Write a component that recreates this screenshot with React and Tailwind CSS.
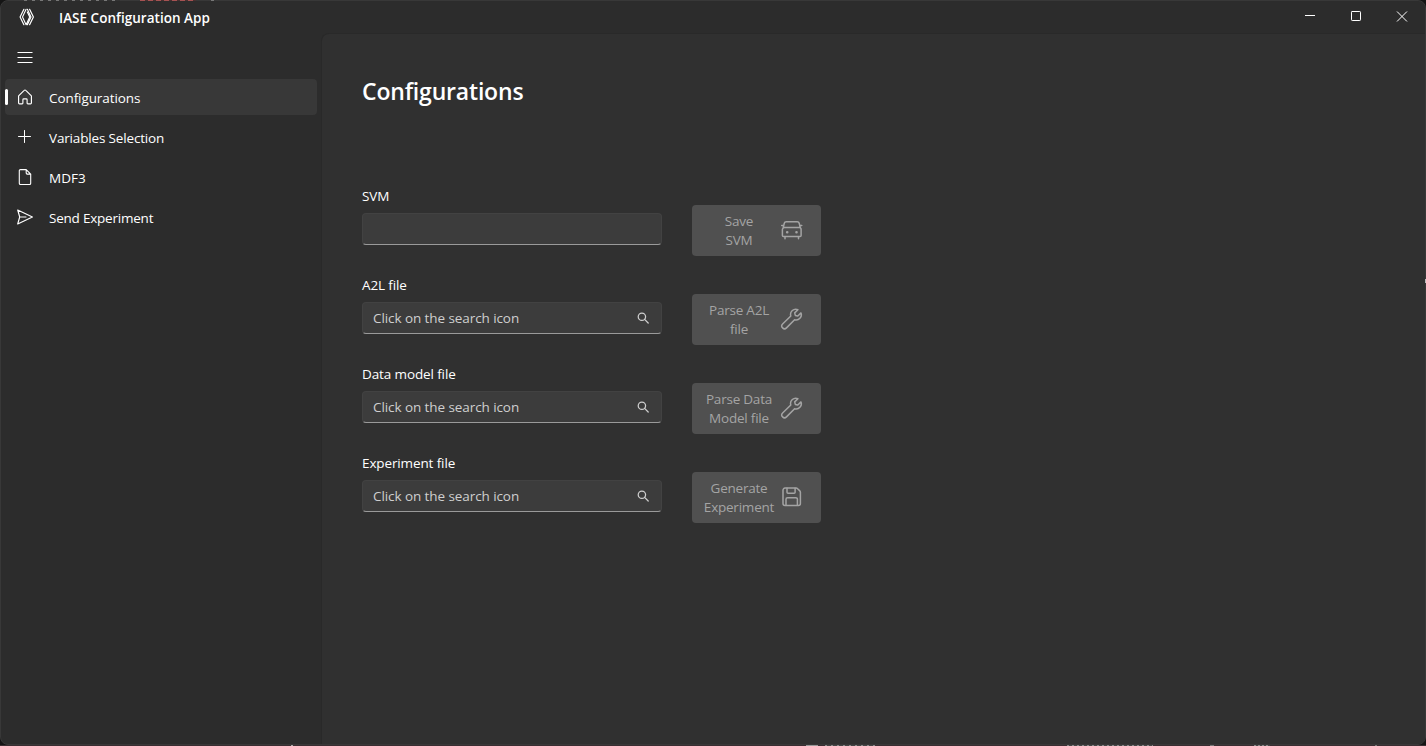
import React from 'react';

function Stroke({ w, h, sw = 1, className = '', children }) {
  return (
    <svg width={w} height={h} viewBox={`0 0 ${w} ${h}`} fill="none" stroke="currentColor" strokeWidth={sw} strokeLinecap="round" strokeLinejoin="round" className={`shrink-0 ${className}`}>
      {children}
    </svg>
  );
}

const HomeIcon = () => (
  <Stroke w={16} h={16} sw={1.15}>
    <path d="M1.6 6.9 7.2 1.3a1.1 1.1 0 0 1 1.6 0l5.6 5.6v7.1a.9.9 0 0 1-.9.9h-2.6a.8.8 0 0 1-.8-.8v-3.4a.8.8 0 0 0-.8-.8H6.7a.8.8 0 0 0-.8.8v3.4a.8.8 0 0 1-.8.8H2.5a.9.9 0 0 1-.9-.9z" />
  </Stroke>
);
const PlusIcon = () => (
  <Stroke w={16} h={16}>
    <path d="M7.5 1.5v12M1.5 7.5h12" />
  </Stroke>
);
const DocIcon = () => (
  <Stroke w={16} h={16} sw={1.1}>
    <path d="M9.2.6H3.5a1.2 1.2 0 0 0-1.2 1.2v12.5a1.2 1.2 0 0 0 1.2 1.2h9a1.2 1.2 0 0 0 1.2-1.2V5.1zM9.2.6v3.5a1 1 0 0 0 1 1h3.5" />
  </Stroke>
);
const SendIcon = () => (
  <Stroke w={16} h={16} sw={1.15}>
    <path d="M.7 1 15.4 8 .7 15l2-7zM2.7 8H9" />
  </Stroke>
);
const CarIcon = () => (
  <Stroke w={24} h={24} sw={1.5}>
    <path d="M3.2 9.6 4.3 5.3a2 2 0 0 1 2-1.5h10.9a2 2 0 0 1 2 1.5l1.1 4.3M1.7 7.6h1.6M20.2 7.6h1.6M4.4 9.6h14.7a2 2 0 0 1 2 2v6a1 1 0 0 1-1 1H3.4a1 1 0 0 1-1-1v-6a2 2 0 0 1 2-2zM5 19v1.8M18.5 19v1.8" />
    <path d="M7.2 14.2h.02M16.5 14.2h.02" strokeWidth="2.6" />
  </Stroke>
);
const WrenchIcon = () => (
  <Stroke w={24} h={24} sw={1.5}>
    <path d="M17.9 2.7a5.2 5.2 0 0 0-7.1 6.3L2.6 17a2.75 2.75 0 0 0 3.9 3.9l8.1-8.2a5.2 5.2 0 0 0 6.4-6.8l-3.2 3.1-2.5-.6-.6-2.5z" />
  </Stroke>
);
const SaveIcon = () => (
  <Stroke w={24} h={24} sw={1.5}>
    <path d="M5 3.1h11.2a2 2 0 0 1 1.4.6l2.2 2.2a2 2 0 0 1 .6 1.4v11.1a2 2 0 0 1-2 2H5a2 2 0 0 1-2-2V5.1a2 2 0 0 1 2-2z" />
    <path d="M7 3.3v3.9a1 1 0 0 0 1 1h6.1a1 1 0 0 0 1-1V3.3M6 20.2v-6a1.5 1.5 0 0 1 1.5-1.5h8.4a1.5 1.5 0 0 1 1.5 1.5v6" />
  </Stroke>
);
const SearchIcon = () => (
  <Stroke w={12} h={12} sw={1.25}>
    <circle cx="4.9" cy="4.7" r="3.7" />
    <path d="m7.6 7.4 3.6 3.6" />
  </Stroke>
);
const Logo = () => (
  <Stroke w={16} h={18} sw={1.2}>
    <path d="M4.9 1.3 1.1 9l3.8 7.7M10.6 1.3 14.4 9l-3.8 7.7" />
    <path d="M7.1 1.3 3.5 9l3.6 7.7L10.7 9 8.3 4M8.4 1.3 12 9l-3.6 7.7" strokeWidth="1.1" />
  </Stroke>
);

const nav = [
  { label: 'Configurations', icon: HomeIcon, active: true, fit: 'tracking-[-0.09px]' },
  { label: 'Variables Selection', icon: PlusIcon, fit: 'tracking-[-0.16px]' },
  { label: 'MDF3', icon: DocIcon, fit: 'tracking-[0.05px]' },
  { label: 'Send Experiment', icon: SendIcon, fit: 'tracking-[-0.22px]' },
];

const rows = [
  { label: 'SVM', lines: ['Save', 'SVM'], icon: CarIcon },
  { label: 'A2L file', search: true, lines: ['Parse A2L', 'file'], icon: WrenchIcon },
  { label: 'Data model file', search: true, lines: ['Parse Data', 'Model file'], icon: WrenchIcon },
  { label: 'Experiment file', search: true, lines: ['Generate', 'Experiment'], icon: SaveIcon },
];

function TitleBar() {
  return (
    <header className="flex h-8 shrink-0 items-start">
      <div className="ml-[18px] mt-[7px]"><Logo /></div>
      <h1 className="ml-[24px] mt-[7px] text-[13.5px] font-semibold leading-5 tracking-[0.02px]">IASE Configuration App</h1>
      <div className="ml-auto mr-[17px] mt-[9px] flex gap-[34px]">
        <Stroke w={12} h={12}><path d="M1 5.5h10" strokeLinecap="butt" /></Stroke>
        <Stroke w={12} h={12}><rect x="1.5" y="1.5" width="9" height="9" rx=".7" /></Stroke>
        <Stroke w={12} h={12}><path d="m1.3 1.8 9.4 9.4M10.7 1.8l-9.4 9.4" /></Stroke>
      </div>
    </header>
  );
}

function Sidebar() {
  return (
    <nav className="flex w-[320px] shrink-0 flex-col pl-1 pr-1">
      <button className="ml-[11px] mt-[15px] flex h-[18px] w-[18px] items-center justify-center" aria-label="Menu">
        <Stroke w={16} h={12}><path d="M.5 1.5h15M.5 6.5h15M.5 11.5h15" strokeLinecap="butt" /></Stroke>
      </button>
      <ul className="mt-[13px] flex flex-col gap-1">
        {nav.map(({ label, icon: Icon, active, fit }) => (
          <li key={label} className={`flex h-9 items-center rounded-[4px] ${active ? 'bg-[#383838]' : ''}`}>
            <span className={`h-4 w-[3px] rounded-full ${active ? 'bg-white' : ''}`} />
            <span className="ml-[9px]"><Icon /></span>
            <span className={`ml-4 mt-[2px] text-[13.5px] leading-5 ${fit}`}>{label}</span>
          </li>
        ))}
      </ul>
    </nav>
  );
}

function Field({ row }) {
  const Icon = row.icon;
  return (
    <div className="flex h-[89px] gap-[30px]">
      <div className="w-[300px]">
        <div className="text-[13.5px] leading-5 tracking-[-0.12px]">{row.label}</div>
        <div className="mt-[7px] flex h-8 items-center justify-between rounded-[4px] border border-[#424242] border-b-[#9a9a9a] bg-[#3c3c3c] pl-[10px] pr-3 text-[#cfcfcf]">
          <span className="text-[13.5px] leading-5 tracking-[-0.08px]">{row.search ? 'Click on the search icon' : ''}</span>
          {row.search && <SearchIcon />}
        </div>
      </div>
      <button className="mt-[19px] flex h-[51px] w-[129px] items-center rounded-[4px] bg-[#505050] pl-[10px] text-[#a4a4a4]">
        <span className="w-[74px] whitespace-nowrap text-center text-[13.5px] leading-[19px] tracking-[-0.22px]">
          {row.lines[0]}<br />{row.lines[1]}
        </span>
        <span className="-mt-[2px] ml-[4px]"><Icon /></span>
      </button>
    </div>
  );
}

export default function App() {
  return (
    <div className="relative h-[746px] w-[1426px] overflow-hidden bg-[#151515] font-['Open_Sans','Noto_Sans',sans-serif] text-white">
      <div className="flex h-[745px] flex-col overflow-hidden rounded-[8px] border border-[#383838] bg-[#2c2c2c]">
        <TitleBar />
        <div className="flex min-h-0 flex-1">
          <Sidebar />
          <main className="flex-1 rounded-tl-[8px] border-l border-t border-[#292929] bg-[#303030] pl-10 pt-[41px]">
            <h2 className="text-[23px] font-semibold leading-8 tracking-[-0.18px]">Configurations</h2>
            <div className="mt-[79px]">
              {rows.map((row) => <Field key={row.label} row={row} />)}
            </div>
          </main>
        </div>
      </div>
      <div className="absolute left-[24px] top-0 h-px w-[96px] bg-[repeating-linear-gradient(90deg,#777_0_3px,#333_3px_8px)]" />
      <div className="absolute left-[140px] top-0 h-px w-[56px] bg-[repeating-linear-gradient(90deg,#a65252_0_5px,#4a3030_5px_8px)]" />
      <div className="absolute left-[211px] top-0 h-px w-[3px] bg-[#777]" />
      <div className="absolute right-0 top-[279px] h-1 w-px bg-[#bbb]" />
      <div className="absolute bottom-0 left-0 h-px w-full bg-[#3a2e32]" />
      <div className="absolute bottom-0 left-[291px] h-px w-[2px] bg-[#aaa]" />
      <div className="absolute bottom-0 left-[806px] h-px w-[12px] bg-[#999]" />
      <div className="absolute bottom-0 left-[825px] h-px w-[50px] bg-[repeating-linear-gradient(90deg,#888_0_2px,#444_2px_6px)]" />
      <div className="absolute bottom-0 left-[1067px] h-px w-[86px] bg-[repeating-linear-gradient(90deg,#888_0_2px,#444_2px_5px)]" />
      <div className="absolute bottom-0 left-[1210px] h-px w-[4px] bg-[#777]" />
      <div className="absolute bottom-0 left-[1254px] h-px w-[16px] bg-[repeating-linear-gradient(90deg,#888_0_2px,#444_2px_4px)]" />
      <div className="absolute bottom-0 left-[1375px] h-px w-[2px] bg-[#777]" />
    </div>
  );
}
